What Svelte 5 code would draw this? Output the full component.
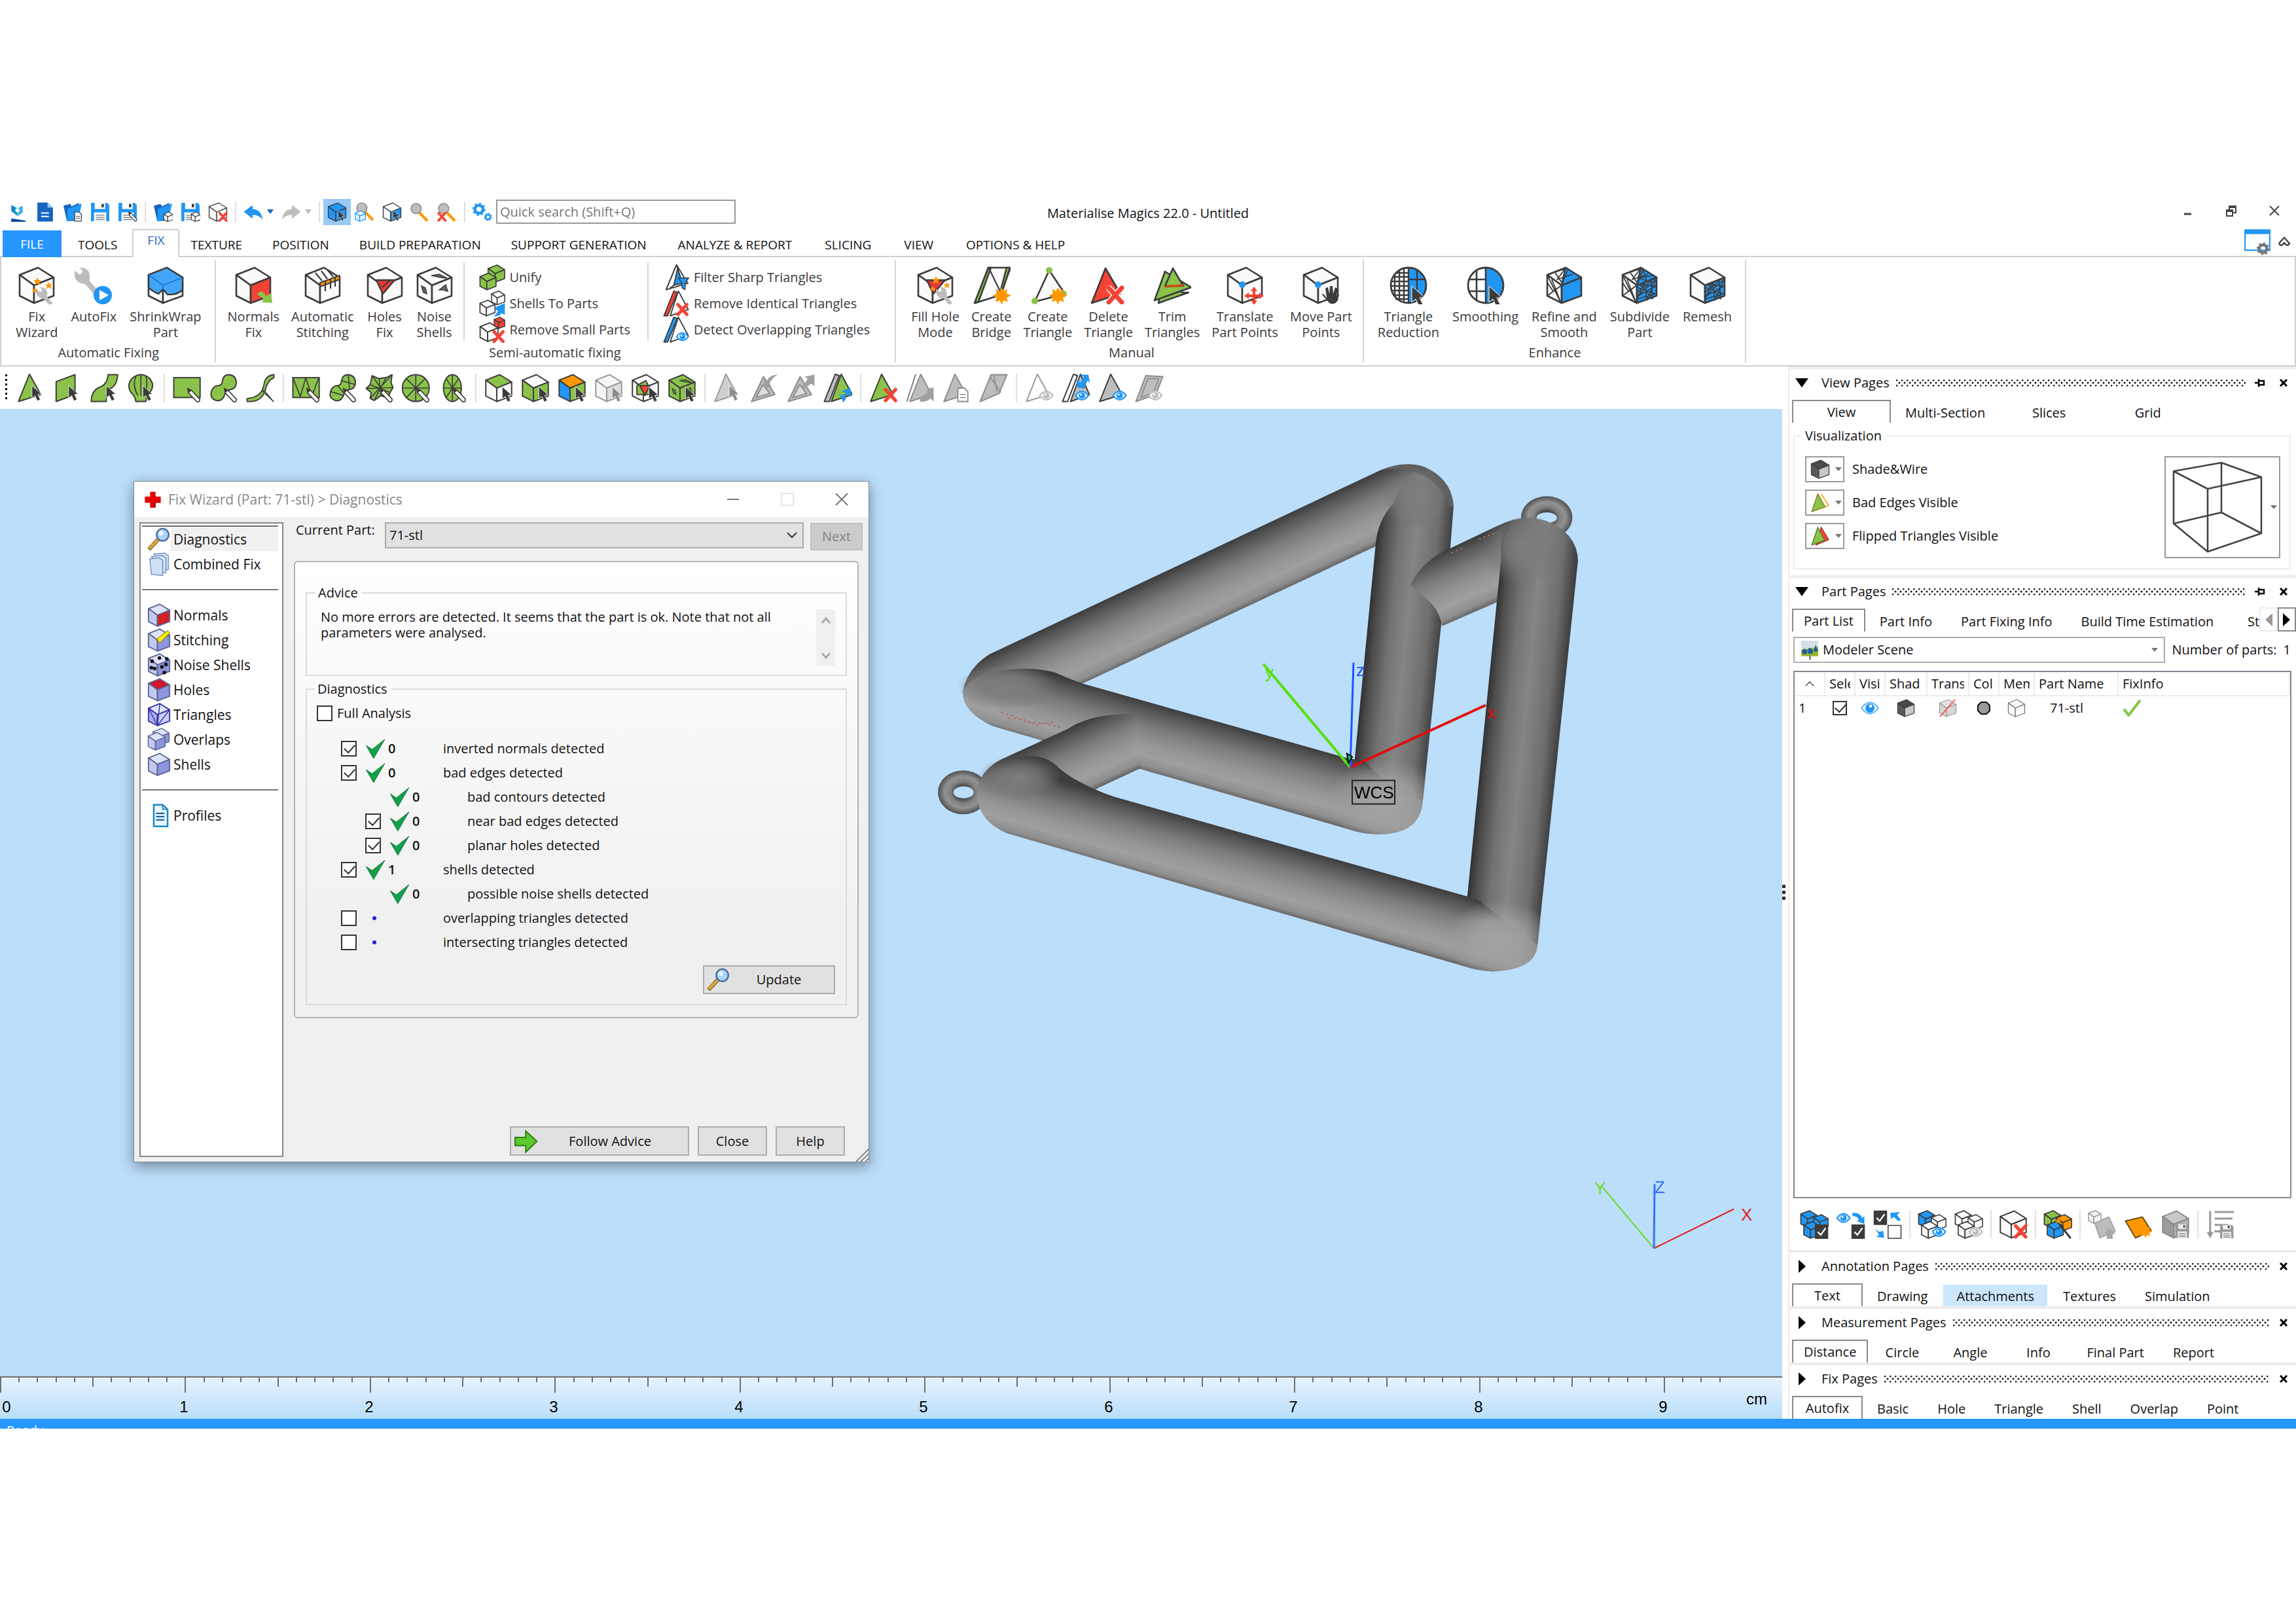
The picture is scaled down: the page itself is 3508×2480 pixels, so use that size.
<script lang="ts">
  type Tool = string | null; // null draws a separator
  type RibbonButton = { icon: string; label: string[] };
  type Check = { text: string; count?: string; box?: boolean; checked?: boolean; indent?: boolean };

  // palette shared by the icons
  const K = '#3c3c3c';
  const W = '#fafafa';
  const B = '#2196f3';
  const G = '#8bc34a';
  const R = '#f44336';
  const O = '#ff9800';
  const N = '#bdbdbd';
  const D = '#8c8c8c';

  // ---- icon building blocks, all on a 58x58 grid ----
  const poly = (points: string, fill: string, stroke = K, w = 2.6) =>
    `<polygon points="${points}" fill="${fill}" stroke="${stroke}" stroke-width="${w}" stroke-linejoin="round"/>`;
  const line = (d: string, stroke = K, w = 2.2, fill = 'none') =>
    `<path d="${d}" fill="${fill}" stroke="${stroke}" stroke-width="${w}" stroke-linejoin="round"/>`;
  const at = (x: number, y: number, s: number, body: string) =>
    `<g transform="translate(${x} ${y}) scale(${s})">${body}</g>`;
  const cube = (top: string, left: string, right: string, k = K, w = 2.6) =>
    poly('31,2 55,17 25,29 3,13', top, k, w) + poly('3,13 25,29 25,56 3,45', left, k, w) + poly('25,29 55,17 55,45 25,56', right, k, w);
  const cursor = (x: number, y: number, fill = K) =>
    at(x, y, 1, `<path d="M0 0V25L6 20L11 31L17 28L12 18L19 17Z" fill="${fill}" stroke="#fff" stroke-width="1"/>`);
  const pen = (x: number, y: number) =>
    at(x, y, 1, `<path d="M0 0L2 9L19 27Q25 27 24 21L8 4Z" fill="#fff" stroke="${K}" stroke-width="2.2"/><path d="M0 0L2 9L8 4Z" fill="${K}"/>`);
  const cross = (x: number, y: number, s = 1) =>
    at(x, y, s, `<path d="M4 4L24 26M24 4L4 26" stroke="${R}" stroke-width="7" stroke-linecap="round"/>`);
  const eye = (x: number, y: number, c = B) =>
    at(x, y, 1, `<path d="M1 10Q14 -7 27 10Q14 27 1 10Z" fill="#fff" stroke="${c}" stroke-width="3"/><circle cx="14" cy="10" r="6.5" fill="${c}"/><circle cx="12" cy="8" r="2" fill="#fff"/>`);
  const burst = (x: number, y: number, s = 1) =>
    at(x, y, s, `<path d="M14 0L17 6L23 3L22 10L29 13L22 17L24 24L17 21L14 28L11 21L4 24L6 17L0 13L6 10L5 3L11 6Z" fill="${O}"/>`);
  const star = (x: number, y: number, s = 1) =>
    at(x, y, s, `<path d="M6 0L8 4L12 4L9 7L11 12L6 9L2 12L3 7L0 4L4 4Z" fill="${O}"/>`);
  const wrench = (x: number, y: number, s: number) =>
    at(x, y, s, `<path d="M0 4L10 12L15 7L10 0Q26 -1 27 15L26 22L40 38L34 45L19 28Q4 28 0 12Z" fill="${N}"/>`);
  const glass = (x: number, y: number, handle = O) =>
    at(x, y, 1, `<path d="M27 29L50 53" stroke="${handle}" stroke-width="8"/><circle cx="17" cy="17" r="15" fill="${N}" stroke="${D}" stroke-width="3"/>`);
  const floppy = (x: number, y: number, s: number, c: string, back = '#fff') =>
    at(x, y, s, `<path d="M2 2H50L56 8V56H2Z" fill="${c}"/><path d="M13 2H44V20H13Z" fill="${back}"/><path d="M33 5H40V15H33Z" fill="${K}"/><path d="M11 30H47V56H11Z" fill="${back}"/><path d="M16 38H42M16 45H42M16 51H42" stroke="${D}" stroke-width="3"/>`);
  const folder = `<path d="M2 10L22 5L26 12L48 2L44 54L12 56Z" fill="#1565c0"/><path d="M14 20L56 4L46 48L12 56Z" fill="${B}"/>`;
  const tri = (fill: string, k = K) => poly('25,1 48,42 3,56', fill, k);
  const page = (x: number, y: number, c = K) =>
    at(x, y, 1, `<path d="M1 1H14L21 8V28H1Z" fill="#fff" stroke="${c}" stroke-width="2.4"/><path d="M5 14H17M5 20H17" stroke="${c}" stroke-width="2"/>`);
  const spokes = (rx: number) =>
    `<ellipse cx="28" cy="29" rx="${rx}" ry="27" fill="${G}" stroke="${K}" stroke-width="2.6"/>` +
    line(`M28 2V56M${28 - rx} 29H${28 + rx}M${28 - rx * 0.7} 10L${28 + rx * 0.7} 48M${28 + rx * 0.7} 10L${28 - rx * 0.7} 48`);
  const mesh = (x: number) =>
    line(`M${x} 32L${x + 28} 42L${x} 50L${x + 12} 24L${x + 15} 52L${x + 29} 20L${x} 46L${x + 29} 30L${x + 5} 28L${x + 24} 50L${x + 22} 22L${x} 40`, K, 1.6);
  const cracked = line('M3 13L24 56L10 20M3 45L25 29L12 38L3 25M8 11L30 4L18 20L42 12M14 8L26 26L34 6', K, 1.8);
  const noise = (c: string) =>
    `<path d="M24 14L36 12L48 18L38 17ZM9 30L15 33L17 42L12 40ZM36 36L46 28L49 38L42 36Z" fill="${c}" stroke="${K}" stroke-width="1.6"/>`;
  const tick = (x: number, y: number) =>
    at(x, y, 1, `<rect width="27" height="29" fill="${K}"/><path d="M6 15L12 21L22 7" fill="none" stroke="#fff" stroke-width="3"/>`);
  const arrow = (d: string, c = B) => `<path d="${d}" fill="${c}"/>`;
  const gear = (x: number, y: number, s: number, c: string) =>
    at(x, y, s, `<circle cx="18" cy="18" r="11" fill="none" stroke="${c}" stroke-width="8"/><circle cx="18" cy="18" r="16" fill="none" stroke="${c}" stroke-width="5" stroke-dasharray="6 6.5"/>`);

  const list = (top: string, left: string, right: string) => cube(top, left, right, '#5c6690', 3);
  const L1 = '#dfe3fa';
  const L2 = '#c3c9f2';
  const L3 = '#8d95dc';

  const icons: Record<string, string> = {
    // quick access bar
    app: `<path d="M10 8L28 18V40L10 26Z" fill="#0d8bc9"/><path d="M28 18L44 10V30L28 42Z" fill="#3fb5ea"/><circle cx="28" cy="24" r="6" fill="#fff"/><path d="M10 48L52 54V58H10Z" fill="#0d4f9c"/>`,
    doc: `<path d="M6 1H36L52 16V57H6Z" fill="#1565c0"/><path d="M36 1V16H52Z" fill="#90caf9"/><path d="M17 32H40M17 42H40" stroke="#fff" stroke-width="4"/>`,
    open: folder + page(34, 28),
    save: floppy(0, 0, 1, B),
    saveas: floppy(0, 0, 1, B) + pen(32, 29),
    openpart: folder + at(30, 28, 0.52, cube('#fff', '#fff', '#fff', K, 4)),
    savepart: floppy(0, 0, 1, B) + at(30, 28, 0.52, cube('#fff', '#fff', '#fff', K, 4)),
    unload: cube(W, W, W) + cross(30, 28),
    undo: arrow('M1 28L27 8V20Q54 22 56 52Q46 37 27 38V49Z'),
    redo: arrow('M57 28L31 8V20Q4 22 2 52Q12 37 31 38V49Z', N),
    pickpart: cube(B, B, B) + cursor(32, 24),
    zoompart: glass(4, 0) + at(0, 24, 0.58, cube('#e3f2fd', '#e3f2fd', '#e3f2fd', B, 4)),
    pickface: cube(W, W, B) + cursor(32, 24),
    zoom: glass(2, 2),
    unzoom: glass(2, 2) + cross(0, 28),
    gears: gear(0, 2, 1.05, B) + gear(34, 32, 0.64, B),
    layout: `<rect x="3" y="4" width="52" height="42" fill="#fff" stroke="${B}" stroke-width="3"/><rect x="2" y="2" width="54" height="10" fill="${B}"/>` + gear(28, 30, 0.72, '#757575'),

    // ribbon
    fixwizard: cube(W, W, W) + wrench(28, 32, 0.64) + star(24, 17) + star(42, 24, 0.9) + star(22, 32, 0.7),
    autofix: wrench(-1, 2, 0.9) + `<circle cx="43" cy="44" r="14" fill="${B}"/><path d="M38 36L52 44L38 52Z" fill="#fff"/>`,
    shrinkwrap: cube(W, W, W) + `<path d="M3 13L31 2L55 17V36Q46 44 32 43L25 35L18 42Q8 38 3 32Z" fill="#42a5f5" stroke="${K}" stroke-width="2.4"/>` + line('M3 13L25 29L55 17M25 29V36', '#1976d2', 1.8),
    normals: cube(W, W, R) + arrow('M34 42L42 38L49 45L56 41L58 56L42 55L45 50Z', G),
    stitching: cube(W, W, W) + poly('25,25 55,14 55,20 25,31', O, K, 2) + line('M18 10L28 22M27 7L36 19M36 5L45 16M33 28V38M41 25V34M48 22V31M33 22V28M41 20V25M48 17V22', K, 2.2),
    holes: cube(W, W, W) + poly('16,21 44,21 26,42', '#e53935', K, 2.4) + line('M36 22L25 32'),
    noiseshells: cube(W, W, W) + noise('#666'),
    unify: at(18, 0, 0.7, cube(G, G, G, K, 3.6)) + at(0, 18, 0.68, cube(G, G, G, K, 3.6)),
    shells: at(26, 0, 0.56, cube(W, W, W, K, 4)) + at(0, 20, 0.64, cube(W, W, W, K, 3.8)) + arrow('M34 42L38 36L57 28V54L50 50Q44 58 32 57Q42 50 41 44Z'),
    smallparts: at(32, 0, 0.46, cube(R, R, R, K, 4.5)) + at(0, 12, 0.76, cube(W, W, W, K, 3.4)) + cross(29, 29),
    sharp: poly('30,1 55,42 7,56', W) + poly('30,1 40,34 14,54 7,56', '#fff') + poly('32,10 44,42 24,46', B) + poly('34,30 57,30 49,42 49,56 42,52 42,42', B, K, 2),
    identical: poly('34,1 56,42 16,56', '#fff') + poly('24,1 32,4 10,56 2,56', R) + cross(29, 27),
    overlapping: poly('34,1 56,42 16,56', '#fff') + poly('24,1 32,4 10,56 2,56', B) + eye(29, 34),
    fillhole: cube(W, W, W) + poly('16,21 44,21 26,42', '#e53935', K, 2.4) + wrench(30, 32, 0.62) + star(24, 15) + star(42, 24, 0.8) + star(21, 30, 0.7),
    bridge: poly('24,2 58,2 42,44 4,56', W) + poly('24,2 28,2 9,54 3,56', G) + poly('52,2 57,2 46,36 42,40', G) + line('M25 3L43 40') + burst(31, 32, 0.95),
    newtri: poly('31,6 55,42 9,54', W) + `<circle cx="31" cy="6" r="5" fill="${G}"/><circle cx="9" cy="53" r="5" fill="${G}"/><circle cx="53" cy="42" r="5" fill="${G}"/>` + burst(31, 32, 0.95),
    deltri: poly('24,3 47,42 3,56', R) + `<path d="M30 34L48 54M48 34L30 54" stroke="#fff" stroke-width="10" stroke-linecap="round"/>` + cross(25, 29),
    trim: poly('18,8 44,40 54,40 8,56', G) + poly('18,8 58,32 2,52', G) + poly('30,3 46,30 18,30', G) + line('M18 31L46 29', '#d84315', 3),
    translate: cube(W, W, W) + `<circle cx="25" cy="28" r="5" fill="${B}"/>` + arrow('M43 31L48 38H45V43H51V40L58 45L51 50V47H45V52H48L43 59L38 52H41V47H35V50L28 45L35 40V43H41V38H38Z', R),
    move: cube(W, W, W) + `<circle cx="25" cy="28" r="5" fill="${B}"/>` + `<path d="M30 42L34 43L38 48L36 33L40 32L42 42L43 30L47 30L48 42L51 32L55 34L53 45L57 42L55 52Q50 60 42 56Z" fill="${K}"/>`,
    reduction: `<ellipse cx="29" cy="29" rx="27" ry="27" fill="#fff"/><path d="M29 2A27 27 0 0 1 29 56Z" fill="${B}"/><circle cx="29" cy="29" r="27" fill="none" stroke="${K}" stroke-width="2.8"/>` + line('M29 2V56M8 12V46M15 6V52M22 3V55M5 16H29M3 23H29M2 30H29M3 37H29M5 44H29M9 50H29M9 10H29M29 20H54M42 5V36', K, 2.4) + cursor(34, 30),
    smoothing: `<circle cx="29" cy="29" r="27" fill="#fff"/><path d="M29 2A27 27 0 0 1 29 56Z" fill="${B}"/><circle cx="29" cy="29" r="27" fill="none" stroke="${K}" stroke-width="2.8"/>` + line('M29 2V56M15 6V52M4 20H29M4 38H29', K, 2.6) + cursor(34, 30),
    refine: cube(W, W, B) + poly('31,2 55,17 25,29', B) + cracked,
    subdivide: cube(W, W, B) + poly('31,2 55,17 25,29', B) + cracked + mesh(25) + line('M34 4L40 22L28 18L48 14', K, 1.6),
    remesh: cube(W, W, B) + mesh(25),

    // marking toolbar
    marktri: tri(G) + cursor(30, 24),
    markplane: poly('5,16 43,2 43,42 5,56', G) + cursor(30, 24),
    marksurf: line('M36 2H55Q54 24 40 30Q32 36 32 56H2Q2 32 22 26Q34 20 36 2Z', K, 2.6, G) + cursor(32, 24),
    markshell: line('M18 56Q16 44 8 38Q-2 22 12 8Q28 -4 44 8Q58 22 46 38Q40 44 38 56Z', K, 2.6, G) + line('M18 5Q10 24 22 44M28 2V44M38 5Q44 24 34 44') + cursor(32, 24),
    markrect: `<rect x="2" y="8" width="53" height="40" fill="${G}" stroke="${K}" stroke-width="2.6"/>` + pen(30, 30),
    markfree: line('M40 2Q54 4 54 18Q54 30 42 32Q32 34 30 44Q26 56 14 54Q0 50 4 36Q8 24 18 24Q26 24 26 14Q28 2 40 2Z', K, 2.6, G) + pen(30, 30),
    markpoly: line('M56 2Q38 4 36 22Q32 48 2 50V56Q30 58 38 36Q42 14 56 8Z', K, 2.4, G) + line('M32 34L55 56L38 36Z', K, 2, '#fff'),
    winrect: `<rect x="2" y="8" width="53" height="40" fill="${G}" stroke="${K}" stroke-width="2.6"/>` + line('M2 8L17 46L28 8L40 46L54 8') + pen(30, 30),
    winfree: line('M40 2Q54 4 54 18Q54 30 42 32Q32 34 30 44Q26 56 14 54Q0 50 4 36Q8 24 18 24Q26 24 26 14Q28 2 40 2Z', K, 2.6, G) + line('M26 14L54 22M40 2L42 32M4 36L30 44M18 24L32 40') + pen(30, 30),
    winstar: poly('14,4 28,10 42,8 54,2 52,18 56,28 50,38 46,50 32,44 18,54 10,50 12,38 2,30 10,22', G) + line('M14 4L46 50M54 2L10 50M28 10L32 44M2 30L56 28M10 22L50 38M42 8L18 54') + pen(30, 30),
    wincircle: spokes(27) + pen(30, 30),
    winellipse: spokes(18) + pen(30, 30),
    cubetop: cube(G, W, W) + cursor(36, 26),
    cubesides: cube(W, G, G) + cursor(36, 26),
    cubecolor: cube(O, B, G) + cursor(36, 26),
    cubegrey: cube('#f5f5f5', '#f5f5f5', '#ddd', '#9a9a9a') + cursor(36, 26, D),
    cubehole: cube(W, W, W) + poly('12,24 30,14 44,42 12,42', G) + poly('18,24 38,24 28,44', R) + cursor(36, 26),
    cubenoise: cube(G, G, G) + noise('#558b2f') + cursor(36, 26),
    gtri: tri('#cfcfcf', '#9a9a9a') + cursor(32, 24, D),
    gshrink: poly('27,6 50,42 3,56', N, D) + poly('26,22 40,40 12,48', '#ddd', D) + arrow('M56 2Q40 2 34 14L28 12L28 30L44 26L39 20Q44 8 56 2Z', '#a0a0a0'),
    ggrow: poly('27,6 50,42 3,56', N, D) + poly('26,22 40,40 12,48', '#ddd', D) + arrow('M56 2V26L50 20Q42 24 34 32L30 24Q40 18 42 10L36 6Z', '#a0a0a0'),
    invert: poly('36,1 58,42 16,56', G) + poly('24,1 32,4 12,56 2,56', N) + arrow('M36 36L54 28L57 46L50 42L42 46L46 50L40 58L32 40L38 44L46 38Z'),
    delmark: tri(G) + cross(29, 28),
    gflip: line('M20 1L2 56', D, 3) + poly('30,1 52,42 8,56', N, D) + arrow('M30 46Q44 42 44 30L56 28V56L50 50Q40 58 28 56Z', '#a0a0a0'),
    gcopy: tri(N, D) + page(30, 28, D),
    gplane: poly('24,2 56,2 40,40 2,56', N, D) + line('M22 6L44 38M30 4L36 36', D),
    hide: tri('#fff', '#9a9a9a') + eye(29, 34, N),
    invhide: poly('38,1 56,42 18,56', N) + poly('24,1 32,4 12,56 2,56', '#fff') + arrow('M36 2H54L57 18L52 14L46 30L32 28L30 12L38 18L44 6Z') + eye(27, 34),
    show: tri(N) + eye(29, 34),
    gshowall: poly('22,4 56,6 42,42 2,56', N, D) + line('M26 10H48L38 38L12 48Z', D) + eye(27, 34, N),

    // view page
    shade: cube('#4a4a4a', '#5a5a5a', '#c8c8c8'),
    badedges: line('M32 3L54 38L12 50', O, 3, '#fff') + poly('22,3 44,42 4,56', G, '#8a7a20'),
    flipped: poly('32,3 54,40 16,56', R, '#a33') + poly('22,3 42,42 4,56', G, '#557a2a'),

    // part page
    scene: `<rect x="4" y="2" width="50" height="44" fill="#d6dfe6"/><path d="M4 30L54 20V48H4Z" fill="#9cb52a"/><circle cx="14" cy="34" r="8" fill="#1f5f9c"/><path d="M28 22L38 28V40H24V28ZM46 14L54 34H40Z" fill="#1f5f9c"/><path d="M30 46V58" stroke="#555" stroke-width="4"/>`,
    transp: cube('#e4e4e4', '#d6d6d6', '#d6d6d6', '#9a9a9a') + line('M52 2L4 56', '#ff5b50', 4),
    memory: cube(W, W, W, '#777'),
    selvis: at(0, 0, 0.62, cube(B, B, B, K, 3.6)) + at(26, 8, 0.56, cube(B, B, B, K, 3.6)) + at(6, 22, 0.62, cube(B, B, B, K, 3.6)) + tick(30, 29),
    vissel: eye(0, 6) + arrow('M32 6Q46 4 52 16L56 12V28L40 22L45 20Q42 12 32 12Z') + tick(30, 29),
    invsel: tick(1, 1) + arrow('M34 6L54 4L48 10L56 20L50 22L42 14L36 18ZM4 38L12 44L20 42L22 56L6 54L12 50Z') + `<rect x="30" y="31" width="26" height="26" fill="#fff" stroke="${K}" stroke-width="2"/>`,
    showsel: at(0, 0, 0.62, cube(B, B, B, K, 3.6)) + at(26, 8, 0.56, cube(W, W, W, K, 3.6)) + at(6, 22, 0.62, cube(W, W, W, K, 3.6)) + eye(29, 34),
    hidesel: at(0, 0, 0.62, cube(W, W, W, K, 3.6)) + at(26, 8, 0.56, cube(W, W, W, K, 3.6)) + at(6, 22, 0.62, cube(W, W, W, K, 3.6)) + eye(29, 34, N),
    colors: at(0, 0, 0.64, cube(G, G, G, K, 3.6)) + at(24, 8, 0.6, cube(O, O, O, K, 3.6)) + at(6, 22, 0.62, cube(B, B, B, K, 3.6)) + star(24, 16, 0.9) + line('M32 28L55 57', K, 4),
    gload: poly('14,26 42,14 55,42 24,56', N, '#a5a5a5') + at(0, 0, 0.48, cube('#f2f2f2', '#f2f2f2', '#f2f2f2', '#999', 4)) + arrow('M44 36L56 48H50V58H38V48H32Z', '#a8a8a8'),
    plate: poly('2,22 36,14 54,42 22,56', O, '#6a4a10') + burst(29, 30, 0.95),
    gsave: cube('#c8c8c8', '#9c9c9c', '#b4b4b4', '#8a8a8a') + floppy(28, 28, 0.5, '#999', '#eee'),
    gsort: `<path d="M9 2V46" stroke="#9a9a9a" stroke-width="4"/><path d="M2 44H16L9 57Z" fill="#9a9a9a"/><path d="M18 4H57M18 17H54M18 30H46M18 43H30" stroke="#9a9a9a" stroke-width="4"/>` + floppy(28, 29, 0.5, '#999', '#eee'),

    // wizard
    plus: `<path d="M20 3H38V19H55V39H38V55H20V39H3V19H20Z" fill="#e60000"/><path d="M38 39V55H20L26 50H34V36H51L55 39Z" fill="#b00000"/>`,
    search: `<path d="M4 54L28 28" stroke="#8a6a20" stroke-width="10"/><path d="M5 52L28 28" stroke="#e0a63c" stroke-width="6"/><circle cx="38" cy="18" r="15" fill="#a9d4fb" stroke="#4c6e9c" stroke-width="4"/><circle cx="34" cy="14" r="6" fill="#e6f4ff"/>`,
    combined: ['16,4 44,2 52,8 52,42 44,44', '10,10 38,8 46,14 46,50 38,50', '6,16 30,14 38,20 38,57 10,54'].map((p) => poly(p, '#cfe0f7', '#6c86b0', 2)).join(''),
    lnormals: list(L1, L2, '#d32020'),
    lstitch: list(L1, L2, L3) + poly('24,26 50,6 55,12 30,36', '#ffee00', '#a89a00', 2),
    lnoise: list(L1, L2, L3) + ['12,20', '18,38', '30,12', '36,34', '46,28', '42,48', '10,36', '48,14'].map((p) => `<circle cx="${p.split(',')[0]}" cy="${p.split(',')[1]}" r="4.5" fill="#111"/>`).join(''),
    lholes: list('#d0152c', L2, L3),
    ltri: cube('#dfe3fa', '#aab0ee', '#c9cdf8', '#3a34a8', 3) + line('M3 13L25 56L31 2M55 17L25 56', '#3a34a8', 2.4),
    loverlap: at(12, 0, 0.76, list(L1, L2, L3)) + at(0, 10, 0.8, list(L1, L2, L3)),
    lshells: list(L1, L2, L3),
    profiles: `<path d="M16 3H38L50 14V56H16Z" fill="#e9f6ff" stroke="#1c86c8" stroke-width="4"/><path d="M38 3V14H50" fill="none" stroke="#1c86c8" stroke-width="3"/><path d="M22 24H42M22 32H42M22 40H42" stroke="#1c5fa8" stroke-width="3.4"/>`,
    ok: '<path d="M4 20L21 31L56 3L25 56Z" fill="#14a04a" stroke="#0b6b30" stroke-width="1.5"/>',
    fixok: line('M6 32L20 50L54 6', G, 8),
    go: '<path d="M3 20H28V5L54 29L28 54V39H3Z" fill="#5cc92e" stroke="#2a8012" stroke-width="3"/>',
  };

  const quickAccess: Tool[] = ['app', 'doc', 'open', 'save', 'saveas', null, 'openpart', 'savepart', 'unload', null, 'undo', 'caret', 'redo', 'caret-off', null, 'pickpart', 'zoompart', 'pickface', 'zoom', 'unzoom', null, 'gears'];
  const tabs = ['TOOLS', 'FIX', 'TEXTURE', 'POSITION', 'BUILD PREPARATION', 'SUPPORT GENERATION', 'ANALYZE & REPORT', 'SLICING', 'VIEW', 'OPTIONS & HELP'];

  const automatic: RibbonButton[] = [
    { icon: 'fixwizard', label: ['Fix', 'Wizard'] },
    { icon: 'autofix', label: ['AutoFix'] },
    { icon: 'shrinkwrap', label: ['ShrinkWrap', 'Part'] },
  ];
  const semi: RibbonButton[] = [
    { icon: 'normals', label: ['Normals', 'Fix'] },
    { icon: 'stitching', label: ['Automatic', 'Stitching'] },
    { icon: 'holes', label: ['Holes', 'Fix'] },
    { icon: 'noiseshells', label: ['Noise', 'Shells'] },
  ];
  const semiParts = [['unify', 'Unify'], ['shells', 'Shells To Parts'], ['smallparts', 'Remove Small Parts']];
  const semiTriangles = [['sharp', 'Filter Sharp Triangles'], ['identical', 'Remove Identical Triangles'], ['overlapping', 'Detect Overlapping Triangles']];
  const manual: RibbonButton[] = [
    { icon: 'fillhole', label: ['Fill Hole', 'Mode'] },
    { icon: 'bridge', label: ['Create', 'Bridge'] },
    { icon: 'newtri', label: ['Create', 'Triangle'] },
    { icon: 'deltri', label: ['Delete', 'Triangle'] },
    { icon: 'trim', label: ['Trim', 'Triangles'] },
    { icon: 'translate', label: ['Translate', 'Part Points'] },
    { icon: 'move', label: ['Move Part', 'Points'] },
  ];
  const enhance: RibbonButton[] = [
    { icon: 'reduction', label: ['Triangle', 'Reduction'] },
    { icon: 'smoothing', label: ['Smoothing'] },
    { icon: 'refine', label: ['Refine and', 'Smooth'] },
    { icon: 'subdivide', label: ['Subdivide', 'Part'] },
    { icon: 'remesh', label: ['Remesh'] },
  ];

  const marking: Tool[] = ['marktri', 'markplane', 'marksurf', 'markshell', null, 'markrect', 'markfree', 'markpoly', null, 'winrect', 'winfree', 'winstar', 'wincircle', 'winellipse', null, 'cubetop', 'cubesides', 'cubecolor', 'cubegrey', 'cubehole', 'cubenoise', null, 'gtri', 'gshrink', 'ggrow', 'invert', null, 'delmark', 'gflip', 'gcopy', 'gplane', null, 'hide', 'invhide', 'show', 'gshowall'];
  const partTools: Tool[] = ['selvis', 'vissel', 'invsel', null, 'showsel', 'hidesel', null, 'unload', null, 'colors', null, 'gload', 'plate', 'gsave', null, 'gsort'];

  const wizardPages: ([string, string] | null)[] = [
    ['search', 'Diagnostics'], ['combined', 'Combined Fix'], null,
    ['lnormals', 'Normals'], ['lstitch', 'Stitching'], ['lnoise', 'Noise Shells'], ['lholes', 'Holes'], ['ltri', 'Triangles'], ['loverlap', 'Overlaps'], ['lshells', 'Shells'], null,
    ['profiles', 'Profiles'],
  ];
  const checks: Check[] = [
    { text: 'inverted normals detected', count: '0', box: true, checked: true },
    { text: 'bad edges detected', count: '0', box: true, checked: true },
    { text: 'bad contours detected', count: '0', indent: true },
    { text: 'near bad edges detected', count: '0', box: true, checked: true, indent: true },
    { text: 'planar holes detected', count: '0', box: true, checked: true, indent: true },
    { text: 'shells detected', count: '1', box: true, checked: true },
    { text: 'possible noise shells detected', count: '0', indent: true },
    { text: 'overlapping triangles detected', box: true },
    { text: 'intersecting triangles detected', box: true },
  ];

  const visualization = [['shade', 'Shade&Wire'], ['badedges', 'Bad Edges Visible'], ['flipped', 'Flipped Triangles Visible']];
  const columns = ['Sele', 'Visi', 'Shad', 'Trans', 'Col', 'Mem', 'Part Name', 'FixInfo'];
  const foldedPages = [
    { title: 'Annotation Pages', tabs: ['Text', 'Drawing', 'Attachments', 'Textures', 'Simulation'], hot: 'Attachments', size: '' },
    { title: 'Measurement Pages', tabs: ['Distance', 'Circle', 'Angle', 'Info', 'Final Part', 'Report'], hot: '', size: 'medium' },
    { title: 'Fix Pages', tabs: ['Autofix', 'Basic', 'Hole', 'Triangle', 'Shell', 'Overlap', 'Point'], hot: '', size: '' },
  ];

  // ruler: one tick per millimetre, 9.3 cm in view
  const tickX = (mm: number) => Math.round(1 + (mm * 2542) / 90);
  const ticks = Array.from({ length: 94 }, (_, mm) => ({
    x: tickX(mm),
    len: mm % 10 === 0 ? 24 : mm % 5 === 0 ? 15 : 8,
  }));
</script>

{#snippet icon(name: string, size: number)}
  <svg viewBox="0 0 58 58" width={size} height={size} aria-hidden="true">{@html icons[name]}</svg>
{/snippet}

{#snippet bigButtons(items: RibbonButton[])}
  {#each items as item}
    <button class="big">
      {@render icon(item.icon, 58)}
      <span>{item.label[0]}{#if item.label[1]}<br />{item.label[1]}{/if}</span>
    </button>
  {/each}
{/snippet}

{#snippet smallButtons(items: string[][])}
  <div class="small-col">
    {#each items as [name, label]}
      <button class="small">{@render icon(name, 40)}<span>{label}</span></button>
    {/each}
  </div>
{/snippet}

{#snippet toolStrip(items: Tool[])}
  {#each items as name}
    {#if name}
      <button class="tool" aria-label={name}>{@render icon(name, 44)}</button>
    {:else}
      <span class="sep"></span>
    {/if}
  {/each}
{/snippet}

{#snippet pageHeader(title: string, open: boolean)}
  <header class="page-header">
    <button class="fold" aria-label="Toggle {title}">
      <svg viewBox="0 0 22 22" width="22" height="22"><path d={open ? 'M1 4H21L11 18Z' : 'M6 1V21L17 11Z'} /></svg>
    </button>
    <h2>{title}</h2>
    <span class="grip"></span>
    {#if open}
      <button class="pin" aria-label="Pin {title}">
        <svg viewBox="0 0 16 14" width="16" height="14"><path d="M0 7H6M6 1V13M6 4H14V10H6" fill="none" stroke="#000" stroke-width="2.4" /></svg>
      </button>
    {/if}
    <button class="shut" aria-label="Close {title}">
      <svg viewBox="0 0 12 12" width="12" height="12"><path d="M1 1L11 11M11 1L1 11" stroke="#000" stroke-width="3" /></svg>
    </button>
  </header>
{/snippet}

{#snippet pageTabs(names: string[], size: string, hot: string)}
  <div class="page-tabs {size}">
    {#each names as name, i}
      <button class:active={i === 0} class:hot={name === hot}>{name}</button>
    {/each}
  </div>
{/snippet}

<main class="screen">
  <div class="titlebar">
    <div class="quick">
      {#each quickAccess as name}
        {#if name === null}
          <span class="sep"></span>
        {:else if name.startsWith('caret')}
          <button class="caret" class:off={name === 'caret-off'} aria-label="History">
            <svg viewBox="0 0 10 7" width="10" height="7"><path d="M0 0H10L5 7Z" /></svg>
          </button>
        {:else}
          <button class="qa" class:pressed={name === 'pickpart'} aria-label={name}>{@render icon(name, 30)}</button>
        {/if}
      {/each}
      <input type="text" placeholder="Quick search (Shift+Q)" aria-label="Quick search" />
    </div>
    <h1>Materialise Magics 22.0 - Untitled</h1>
    <div class="window-buttons">
      <button aria-label="Minimize"><svg viewBox="0 0 20 20" width="20" height="20"><path d="M4 15H15" stroke-width="3" /></svg></button>
      <button aria-label="Restore"><svg viewBox="0 0 20 20" width="20" height="20"><path d="M3 9H12V18H3ZM7 8V3H17V13H13M7 5H17M3 11H12" stroke-width="2" /></svg></button>
      <button aria-label="Close"><svg viewBox="0 0 20 20" width="20" height="20"><path d="M3 3L17 17M17 3L3 17" stroke-width="2" /></svg></button>
    </div>
  </div>

  <nav class="tabs">
    <button class="file">FILE</button>
    {#each tabs as tab}
      <button class:current={tab === 'FIX'}>{tab}</button>
    {/each}
    <span class="fill"></span>
    <div class="tab-tools">
      <button aria-label="Layout">{@render icon('layout', 42)}</button>
      <button aria-label="Collapse ribbon">
        <svg viewBox="0 0 20 20" width="20" height="20"><path d="M2 12L10 3L18 12Q15 18 10 11Q5 18 2 12" fill="none" stroke="#444" stroke-width="2.4" /></svg>
      </button>
    </div>
  </nav>

  <section class="ribbon">
    <div class="group roomy">
      <div class="items">{@render bigButtons(automatic)}</div>
      <h3>Automatic Fixing</h3>
    </div>
    <div class="group semi">
      <div class="items">
        {@render bigButtons(semi)}
        <span class="divider"></span>
        {@render smallButtons(semiParts)}
        <span class="divider"></span>
        {@render smallButtons(semiTriangles)}
      </div>
      <h3>Semi-automatic fixing</h3>
    </div>
    <div class="group manual">
      <div class="items">{@render bigButtons(manual)}</div>
      <h3>Manual</h3>
    </div>
    <div class="group roomy">
      <div class="items">{@render bigButtons(enhance)}</div>
      <h3>Enhance</h3>
    </div>
  </section>

  <div class="workspace">
    <div class="stage">
      <div class="marking">
        <span class="handle"></span>
        {@render toolStrip(marking)}
      </div>

      <div class="scene">
        <svg class="model" viewBox="0 0 2723 1477" preserveAspectRatio="xMidYMid meet">
          <svg x="1400" y="45" width="1100" height="860" viewBox="0 0 1568 1568" preserveAspectRatio="none">
            <defs>
              {#each [['ga', 585, 344, 675, 493], ['gb', 650, 785, 588, 957], ['gd', 1200, 282, 1290, 437], ['gf', 800, 1130, 738, 1300], ['gg', 330, 808, 418, 957]] as [id, x1, y1, x2, y2]}
                <linearGradient id={String(id)} gradientUnits="userSpaceOnUse" {x1} {y1} {x2} {y2}>
                  <stop offset="0" stop-color="#3d3d3d" />
                  <stop offset=".12" stop-color="#555" />
                  <stop offset=".35" stop-color="#7b7b7b" />
                  <stop offset=".6" stop-color="#959595" />
                  <stop offset=".78" stop-color="#9f9f9f" />
                  <stop offset=".93" stop-color="#8e8e8e" />
                  <stop offset="1" stop-color="#6a6a6a" />
                </linearGradient>
              {/each}
              {#each [['gc', 985, 500, 1148, 513], ['ge', 1236, 800, 1404, 813]] as [id, x1, y1, x2, y2]}
                <linearGradient id={String(id)} gradientUnits="userSpaceOnUse" {x1} {y1} {x2} {y2}>
                  <stop offset="0" stop-color="#303030" />
                  <stop offset=".1" stop-color="#4c4c4c" />
                  <stop offset=".3" stop-color="#737373" />
                  <stop offset=".52" stop-color="#858585" />
                  <stop offset=".8" stop-color="#6e6e6e" />
                  <stop offset="1" stop-color="#3c3c3c" />
                </linearGradient>
              {/each}
              <radialGradient id="knee" cx=".5" cy=".5" r=".5">
                <stop offset="0" stop-color="#a4a4a4" />
                <stop offset=".5" stop-color="#a0a0a0" stop-opacity=".85" />
                <stop offset="1" stop-color="#989898" stop-opacity="0" />
              </radialGradient>
              <radialGradient id="shade" cx=".5" cy=".5" r=".5">
                <stop offset="0" stop-color="#7e7e7e" />
                <stop offset=".5" stop-color="#7a7a7a" stop-opacity=".75" />
                <stop offset="1" stop-color="#747474" stop-opacity="0" />
              </radialGradient>
              <radialGradient id="ring" cx=".5" cy=".5" r=".5">
                <stop offset=".3" stop-color="#4a4a4a" />
                <stop offset=".5" stop-color="#808080" />
                <stop offset=".72" stop-color="#929292" />
                <stop offset="1" stop-color="#505050" />
              </radialGradient>
              <clipPath id="clip-b"><path d="M940 890Q1060 820 1120 850L1103 1010Q1098 1100 1010 1102Q985 1102 960 1095L800 1040Z" /></clipPath>
              <clipPath id="clip-f"><path d="M1200 1275L1380 1200L1353 1410Q1350 1480 1255 1484Q1230 1482 1210 1476L1000 1400Z" /></clipPath>
              <clipPath id="clip-e"><path d="M1200 275L1270 240Q1335 200 1370 228Q1440 262 1441 340L1430 500L1270 450Z" /></clipPath>
              <clipPath id="clip-c"><path d="M1010 88Q1065 58 1110 80Q1168 115 1170 190L1163 305L1000 300L960 200Z" /></clipPath>
            </defs>

            <!-- eyelets -->
            <path fill="url(#ring)" fill-rule="evenodd" d="M1317 219A56 59 0 1 1 1429 219A56 59 0 1 1 1317 219ZM1351 220A22 15 0 1 0 1395 220A22 15 0 1 0 1351 220Z" />
            <path fill="url(#ring)" fill-rule="evenodd" d="M47 985A55 61 0 1 1 157 985A55 61 0 1 1 47 985ZM81 985A22 17 0 1 0 125 985A22 17 0 1 0 81 985Z" />

            <!-- inner triangle -->
            <path fill="url(#ga)" d="M101 705Q110 640 160 600L1010 88Q1065 60 1110 80L1080 140L1000 300L362 682L250 760L110 740Z" />
            <path fill="url(#gc)" d="M1040 180Q1062 115 1100 76Q1168 115 1170 190L1163 305L1143 520L1103 1010L960 1000L955 890L1000 300Q1004 225 1040 180Z" />
            <path fill="#5f5f5f" d="M1010 88Q1065 58 1110 80Q1168 115 1170 190L1160 190Q1140 110 1080 92Q1050 80 1010 88Z" />
            <ellipse cx="1088" cy="165" rx="72" ry="90" fill="url(#shade)" clip-path="url(#clip-c)" />
            <path fill="url(#gb)" d="M101 705Q120 655 200 643Q260 636 300 650Q340 672 362 682L940 890Q985 895 995 925Q1050 980 1103 1010Q1098 1100 1010 1102Q985 1102 960 1095L165 800Q100 760 101 705Z" />
            <ellipse cx="200" cy="690" rx="110" ry="62" fill="url(#shade)" />
            <ellipse cx="1022" cy="1010" rx="130" ry="120" fill="url(#knee)" clip-path="url(#clip-b)" />

            <!-- outer triangle -->
            <path fill="url(#gd)" d="M1075 408Q1105 335 1163 305L1270 240Q1300 222 1335 221L1330 330L1270 452L1145 522Q1140 480 1115 450Q1095 428 1075 408Z" />
            <path fill="url(#ge)" d="M1274 325Q1268 260 1300 226Q1335 217 1370 228Q1440 262 1441 340L1353 1410L1240 1400L1200 1275L1274 330Z" />
            <ellipse cx="1325" cy="300" rx="92" ry="110" fill="url(#shade)" clip-path="url(#clip-e)" />
            <path fill="url(#gg)" d="M132 980Q140 920 190 890L330 808Q370 775 430 769L480 765Q488 800 488 918L398 972L300 1040Z" />
            <path fill="url(#gf)" d="M132 980Q140 915 200 890Q270 872 300 905Q320 930 345 948Q390 980 430 997L1200 1275Q1225 1280 1238 1300Q1290 1350 1353 1410Q1350 1480 1255 1484Q1230 1482 1210 1476L200 1100Q130 1065 132 980Z" />
            <ellipse cx="225" cy="945" rx="92" ry="65" fill="url(#shade)" />
            <ellipse cx="1270" cy="1395" rx="120" ry="110" fill="url(#knee)" clip-path="url(#clip-f)" />

            <!-- traces of marked triangles -->
            <path d="M185 762L215 775L240 790L280 792L318 806M200 778L235 782L262 798L300 788M1165 318L1190 305M1225 280L1270 258" fill="none" stroke="#b06666" stroke-width="3" stroke-dasharray="5 6" />
          </svg>

          <g fill="none" stroke-width="3">
            <path d="M2063 547L2270 452" stroke="#e60a0a" stroke-width="4" />
            <path d="M2063 547L1930 389" stroke="#58e010" stroke-width="4" />
            <path d="M2063 547L2068 387" stroke="#1c55ff" />
            <path d="M2058 526L2066 531L2060 540Z" fill="#00d860" stroke="#000" stroke-width="2" />
            <rect x="2066" y="567" width="65" height="36" stroke="#222" stroke-width="2" />
            <path d="M2527 1282L2649 1222" stroke="#e02020" stroke-width="2" />
            <path d="M2527 1282L2447 1187" stroke="#6edc28" stroke-width="2" />
            <path d="M2527 1282L2528 1184" stroke="#3c6cff" />
          </g>
          <g class="axis-text">
            <text x="2069" y="594">WCS</text>
            <text x="2272" y="472" fill="#e60a0a">x</text>
            <text x="1933" y="410" fill="#58e010">y</text>
            <text x="2072" y="407" fill="#1c55ff">z</text>
            <text x="2660" y="1239" fill="#e02020">X</text>
            <text x="2436" y="1198" fill="#6edc28">Y</text>
            <text x="2528" y="1197" fill="#3c6cff">Z</text>
          </g>
        </svg>

        <div class="wizard" role="dialog" aria-labelledby="wizard-title">
          <header>
            {@render icon('plus', 27)}
            <h2 id="wizard-title">Fix Wizard (Part: 71-stl) &gt; Diagnostics</h2>
            <button aria-label="Minimize"><svg viewBox="0 0 20 20" width="20" height="20"><path d="M1 10H19" stroke="#777" stroke-width="2" /></svg></button>
            <button aria-label="Maximize" disabled><svg viewBox="0 0 20 20" width="20" height="20"><rect x="1" y="1" width="18" height="18" fill="none" stroke="#e6e6e6" stroke-width="2" /></svg></button>
            <button aria-label="Close"><svg viewBox="0 0 20 20" width="20" height="20"><path d="M1 1L19 19M19 1L1 19" stroke="#777" stroke-width="2" /></svg></button>
          </header>
          <div class="wizard-body">
            <ul class="wizard-pages">
              {#each wizardPages as item, i}
                {#if item}
                  <li class:chosen={i === 0}>
                    <button>{@render icon(item[0], 36)}<span>{item[1]}</span></button>
                  </li>
                {:else}
                  <li class="rule"></li>
                {/if}
              {/each}
            </ul>
            <div class="wizard-main">
              <div class="current">
                <label for="current-part">Current Part:</label>
                <div class="combo">
                  <select id="current-part"><option>71-stl</option></select>
                  <svg viewBox="0 0 16 10" width="16" height="10"><path d="M1 1L8 8L15 1" fill="none" stroke="#333" stroke-width="2" /></svg>
                </div>
                <button class="next" disabled>Next</button>
              </div>
              <div class="sheet">
                <fieldset>
                  <legend>Advice</legend>
                  <div class="advice">
                    <p>No more errors are detected. It seems that the part is ok. Note that not all parameters were analysed.</p>
                    <div class="scroll">
                      <svg viewBox="0 0 14 10" width="14" height="10"><path d="M1 9L7 2L13 9" fill="none" stroke="#aaa" stroke-width="3" /></svg>
                      <svg viewBox="0 0 14 10" width="14" height="10"><path d="M1 1L7 8L13 1" fill="none" stroke="#aaa" stroke-width="3" /></svg>
                    </div>
                  </div>
                </fieldset>
                <fieldset class="diagnostics">
                  <legend>Diagnostics</legend>
                  <label class="full"><input type="checkbox" />Full Analysis</label>
                  {#each checks as row}
                    <label class="check" class:indent={row.indent}>
                      <span class="box">{#if row.box}<input type="checkbox" checked={row.checked} />{/if}</span>
                      <span class="state">
                        {#if row.count}{@render icon('ok', 32)}{:else}<i></i>{/if}
                      </span>
                      <b>{row.count ?? ''}</b>
                      <span>{row.text}</span>
                    </label>
                  {/each}
                  <button class="push update">{@render icon('search', 36)}<span>Update</span></button>
                </fieldset>
              </div>
              <div class="actions">
                <button class="push follow">{@render icon('go', 38)}<span>Follow Advice</span></button>
                <button class="push">Close</button>
                <button class="push">Help</button>
              </div>
            </div>
          </div>
          <svg class="resize" viewBox="0 0 20 20" width="20" height="20"><path d="M1 20L20 1M8 20L20 8M15 20L20 15" stroke="#888" stroke-width="2" /></svg>
        </div>
      </div>

      <svg class="ruler" viewBox="0 0 2723 65" preserveAspectRatio="xMinYMin meet">
        <path d="M0 1H2723" stroke="#707070" stroke-width="2" />
        {#each ticks as t}
          <path d="M{t.x} 1v{t.len}" stroke="#707070" stroke-width="2" />
        {/each}
        {#each { length: 10 } as _, i}
          <text x={i === 0 ? 10 : tickX(i * 10) - 2} y="55" text-anchor="middle">{i}</text>
        {/each}
        <text x="2684" y="43" text-anchor="middle">cm</text>
      </svg>
    </div>

    <div class="splitter"><span></span></div>

    <aside>
      <section>
        {@render pageHeader('View Pages', true)}
        {@render pageTabs(['View', 'Multi-Section', 'Slices', 'Grid'], 'wide', '')}
        <fieldset class="visual">
          <legend>Visualization</legend>
          <div class="modes">
            {#each visualization as [name, label]}
              <div class="mode">
                <button aria-label={label}>
                  {@render icon(name, 30)}
                  <svg viewBox="0 0 10 6" width="10" height="6"><path d="M0 0H10L5 6Z" fill="#777" /></svg>
                </button>
                <span>{label}</span>
              </div>
            {/each}
          </div>
          <button class="view-cube" aria-label="Standard views">
            <svg viewBox="0 0 138 140" width="138" height="140">
              <path d="M2 15L75 2L136 24L54 42ZM2 15V95L54 138V42M136 24V110L54 138M75 2V78L2 95M75 78L136 110" fill="none" stroke="#444" stroke-width="2.6" stroke-linejoin="round" />
            </svg>
            <svg viewBox="0 0 10 6" width="10" height="6"><path d="M0 0H10L5 6Z" fill="#777" /></svg>
          </button>
        </fieldset>
      </section>

      <section class="parts">
        {@render pageHeader('Part Pages', true)}
        <div class="tab-scroll">
          {@render pageTabs(['Part List', 'Part Info', 'Part Fixing Info', 'Build Time Estimation', 'Str'], '', '')}
          <button class="left" aria-label="Scroll left" disabled><svg viewBox="0 0 12 20" width="12" height="20"><path d="M12 0V20L1 10Z" fill="#999" /></svg></button>
          <button aria-label="Scroll right"><svg viewBox="0 0 12 20" width="12" height="20"><path d="M0 0V20L11 10Z" /></svg></button>
        </div>
        <div class="scene-row">
          <div class="combo scene-combo">
            {@render icon('scene', 30)}
            <select aria-label="Scene"><option>Modeler Scene</option></select>
            <svg class="drop" viewBox="0 0 10 6" width="10" height="6"><path d="M0 0H10L5 6Z" fill="#777" /></svg>
          </div>
          <span>Number of parts:</span><span>1</span>
        </div>
        <div class="part-list">
          <table>
            <colgroup><col class="c-num" /><col class="c-s" /><col class="c-s" /><col class="c-m" /><col class="c-m" /><col class="c-s" /><col class="c-mem" /><col class="c-name" /><col /></colgroup>
            <thead>
              <tr>
                <th class="sort"><svg viewBox="0 0 14 8" width="14" height="8"><path d="M1 7L7 1L13 7" fill="none" stroke="#555" stroke-width="1.6" /></svg></th>
                {#each columns as head}
                  <th><span>{head}</span></th>
                {/each}
              </tr>
            </thead>
            <tbody>
              <tr>
                <td>1</td>
                <td class="mid"><input type="checkbox" checked aria-label="Selected" /></td>
                <td class="mid"><svg viewBox="0 0 28 20" width="28" height="20">{@html `<path d="M1 10Q14 -7 27 10Q14 27 1 10Z" fill="#fff" stroke="#5cb3fa" stroke-width="2"/><circle cx="14" cy="10" r="7" fill="${B}"/><circle cx="15" cy="7" r="2.4" fill="#fff"/>`}</svg></td>
                <td class="mid">{@render icon('shade', 28)}</td>
                <td class="mid">{@render icon('transp', 28)}</td>
                <td class="mid"><svg viewBox="0 0 22 22" width="22" height="22"><path d="M7 2H15L20 7V15L15 20H7L2 15V7Z" fill="#9a9a9a" stroke="#111" stroke-width="2" /></svg></td>
                <td class="mid">{@render icon('memory', 28)}</td>
                <td class="name">71-stl</td>
                <td>{@render icon('fixok', 30)}</td>
              </tr>
            </tbody>
          </table>
        </div>
        <div class="part-tools">{@render toolStrip(partTools)}</div>
      </section>

      {#each foldedPages as item}
        <section>
          {@render pageHeader(item.title, false)}
          {@render pageTabs(item.tabs, item.size, item.hot)}
        </section>
      {/each}
    </aside>
  </div>

  <footer><span>Ready</span></footer>
</main>

<style>
  :global(body) {
    margin: 0;
    background: #fff;
  }

  * {
    box-sizing: border-box;
  }

  .screen {
    display: flex;
    flex-direction: column;
    min-height: 100vh;
    padding: 301px 0 297px;
    font-family: 'Open Sans', 'Noto Sans', sans-serif;
    font-size: 20px;
    line-height: 24px;
    color: #111;
    background: #fff;
  }

  button,
  select,
  input {
    margin: 0;
    padding: 0;
    border: 0;
    border-radius: 0;
    background: none;
    font: inherit;
    color: inherit;
  }

  svg {
    display: block;
    flex: none;
  }

  h1,
  h2,
  h3,
  p,
  ul {
    margin: 0;
    padding: 0;
    font-size: 20px;
    font-weight: 400;
  }

  fieldset {
    margin: 0;
    min-width: 0;
    border: 2px solid #dcdcdc;
  }

  input[type='checkbox'] {
    appearance: none;
    display: block;
    position: relative;
    width: 24px;
    height: 24px;
    border: 2px solid #333;
    background: #fff;
  }

  input[type='checkbox']:checked::after {
    content: '';
    position: absolute;
    left: 3px;
    top: 3px;
    width: 14px;
    height: 8px;
    border: solid #333;
    border-width: 0 0 2px 2px;
    transform: rotate(-48deg);
  }

  /* --- Title bar --- */
  .titlebar {
    display: grid;
    grid-template-columns: 1fr auto 1fr;
    align-items: center;
    height: 49px;
  }

  .quick {
    display: flex;
    align-items: center;
    padding: 0 0 4px 6px;
  }

  .qa {
    display: flex;
    justify-content: center;
    align-items: center;
    width: 42px;
    height: 40px;
  }

  .qa.pressed {
    background: #99c9f5;
  }

  .caret {
    width: 16px;
    fill: #1565c0;
  }

  .caret.off {
    fill: #bbb;
  }

  .sep {
    flex: none;
    width: 2px;
    height: 32px;
    margin: 0 5px;
    background: #e0e0e0;
  }

  .quick input {
    width: 366px;
    height: 37px;
    padding: 0 4px;
    border: 2px solid #999;
  }

  .quick input::placeholder {
    color: #777;
    opacity: 1;
  }

  .window-buttons {
    display: flex;
    justify-content: flex-end;
    padding-bottom: 8px;
  }

  .window-buttons button {
    display: flex;
    justify-content: center;
    width: 66px;
    fill: none;
    stroke: #444;
  }

  /* --- Ribbon tabs --- */
  .tabs {
    display: flex;
    height: 43px;
    padding-left: 2px;
    box-shadow: inset 0 -2px #d0d0d0;
    font-size: 19px;
  }

  .tabs > button {
    padding: 3px 21px 0;
    border: 2px solid transparent;
    border-bottom: 0;
  }

  .tabs > button:nth-child(n + 8) {
    padding: 3px 23px 0;
  }

  .tabs .file {
    width: 94px;
    padding-top: 0;
    color: #fff;
    background: #2796ff;
    background-clip: padding-box;
  }

  .tabs .current {
    border-color: #d0d0d0;
    background: #fff;
    color: #2b6cc4;
  }

  .fill {
    flex: 1;
  }

  .tab-tools {
    display: flex;
    align-items: center;
    gap: 10px;
    padding: 0 8px 3px 0;
  }

  /* --- Ribbon --- */
  .ribbon {
    display: flex;
    height: 167px;
    padding: 4px 0 4px 1px;
    border: solid #d0d0d0;
    border-width: 0 2px 2px;
    color: #3b3b3b;
  }

  .group {
    display: flex;
    flex-direction: column;
    padding: 0 10px 0 11px;
    border-right: 2px solid #d6d6d6;
  }

  .group.semi {
    padding-left: 9px;
  }

  .group.manual {
    padding: 0 7px 0 14px;
  }

  .items {
    display: flex;
    flex: 1;
  }

  .group h3 {
    padding-bottom: 3px;
    text-align: center;
  }

  .big {
    display: flex;
    flex-direction: column;
    align-items: center;
    padding: 10px 9px 0;
    line-height: 24px;
  }

  .roomy .big {
    padding: 10px 10px 0;
  }

  .big span {
    margin-top: 7px;
  }

  .divider {
    width: 2px;
    height: 120px;
    margin: 4px 0 0 6px;
    background: #d6d6d6;
  }

  .small-col {
    display: flex;
    flex-direction: column;
    padding: 7px 20px 0 22px;
  }

  .small {
    display: flex;
    align-items: center;
    gap: 7px;
    height: 40px;
  }

  .small-col:last-child {
    padding-right: 28px;
  }

  /* --- Workspace --- */
  .workspace {
    display: flex;
    flex: 1;
  }

  .stage {
    display: flex;
    flex: 1;
    flex-direction: column;
    min-width: 0;
  }

  .marking {
    display: flex;
    align-items: center;
    height: 65px;
    padding-left: 8px;
  }

  .handle {
    width: 3px;
    height: 42px;
    margin-right: 9px;
    background: repeating-linear-gradient(#000 0 3px, transparent 3px 7px);
  }

  .tool {
    display: flex;
    justify-content: center;
    width: 56px;
  }

  .marking .sep,
  .part-tools .sep {
    height: 44px;
  }

  .marking .sep {
    margin: 0 6px;
  }

  .scene {
    position: relative;
    flex: 1;
    background: #bbdefb;
  }

  .model {
    width: 100%;
    height: 100%;
  }

  .axis-text {
    font-family: 'Liberation Sans', sans-serif;
    font-size: 26px;
  }

  .ruler {
    width: 100%;
    height: 65px;
    background: linear-gradient(#e8f3fd, #b9defa);
    font-family: 'Liberation Sans', sans-serif;
    font-size: 24px;
  }

  .splitter {
    display: flex;
    align-items: center;
    width: 9px;
  }

  .splitter span {
    width: 5px;
    height: 24px;
    background: repeating-linear-gradient(#333 0 5px, transparent 5px 9px);
  }

  /* --- Fix wizard window --- */
  .wizard {
    position: absolute;
    left: 204px;
    top: 110px;
    width: 1124px;
    border: 1px solid #7c8a96;
    background: #f0f0f0;
    box-shadow: 0 6px 20px rgba(0, 0, 0, 0.4);
  }

  .wizard header {
    display: flex;
    align-items: center;
    height: 54px;
    padding-left: 15px;
    background: #fff;
  }

  .wizard header h2 {
    flex: 1;
    padding-left: 10px;
    font-size: 21px;
    color: #8a8a8a;
  }

  .wizard header button {
    display: flex;
    justify-content: center;
    width: 83px;
  }

  .wizard-body {
    display: flex;
    gap: 16px;
    padding: 8px 15px 7px 8px;
  }

  .wizard-pages {
    width: 220px;
    padding: 3px 6px 0 2px;
    border: 2px solid #828790;
    background: #fff;
    font-size: 21px;
    list-style: none;
  }

  .wizard-pages li {
    height: 38px;
  }

  .wizard-pages li:first-child {
    border-top: 2px solid #707070;
    height: 40px;
  }

  .wizard-pages button {
    display: flex;
    align-items: center;
    width: 100%;
    height: 38px;
    padding-left: 8px;
  }

  .wizard-pages span {
    flex: 1;
    padding: 6px 0 6px 4px;
    text-align: left;
  }

  .wizard-pages .chosen span {
    background: #f0f0f0;
  }

  .wizard-pages .rule {
    height: 40px;
    background: linear-gradient(#777, #777) center / 100% 2px no-repeat;
  }

  .wizard-main {
    flex: 1;
    min-width: 0;
  }

  .current {
    display: flex;
    align-items: flex-start;
    margin-right: -6px;
    padding-left: 3px;
  }

  .current label {
    width: 136px;
  }

  .combo {
    position: relative;
    display: flex;
    align-items: center;
    flex: 1;
    height: 40px;
    border: 2px solid #adadad;
    background: #e1e1e1;
  }

  .combo select {
    appearance: none;
    position: absolute;
    inset: 0;
    width: 100%;
    height: 100%;
    padding: 0 36px 0 5px;
  }

  .combo > svg {
    position: absolute;
    right: 8px;
    pointer-events: none;
  }

  .next {
    width: 80px;
    height: 42px;
    margin: 1px 0 0 10px;
    border: 2px solid #bfbfbf;
    background: #ccc;
    color: #838383;
  }

  .sheet {
    margin: 16px 0 0;
    padding: 35px 16px 18px 16px;
    border: 2px solid #b4b4b4;
    border-radius: 6px;
    background: linear-gradient(#fff, #f0f0f0 80%);
  }

  .sheet fieldset {
    padding: 13px 16px 14px 21px;
  }

  legend {
    margin-left: -9px;
    padding: 0 5px;
  }

  .sheet .diagnostics {
    margin-top: 8px;
    padding: 13px 16px 15px 15px;
  }

  .diagnostics legend {
    margin-left: -4px;
  }

  .advice {
    display: flex;
    justify-content: space-between;
  }

  .advice p {
    width: 720px;
  }

  .scroll {
    display: flex;
    flex-direction: column;
    justify-content: space-between;
    align-items: center;
    width: 29px;
    height: 86px;
    padding: 12px 0 10px;
    background: #f0f0f0;
  }

  .full {
    display: flex;
    align-items: center;
    gap: 7px;
    margin-bottom: 24px;
  }

  .check {
    display: flex;
    align-items: center;
    height: 36px;
    margin-bottom: 1px;
    padding-left: 37px;
  }

  .check.indent {
    padding-left: 74px;
  }

  .box {
    width: 36px;
  }

  .state {
    display: flex;
    width: 36px;
  }

  .state i {
    width: 6px;
    height: 6px;
    margin-left: 12px;
    border-radius: 50%;
    background: #2020e0;
  }

  .check b {
    width: 84px;
    font-weight: 600;
  }

  .push {
    display: flex;
    align-items: center;
    justify-content: center;
    min-width: 106px;
    height: 45px;
    border: 2px solid #adadad;
    background: #e1e1e1;
  }

  .push span {
    flex: 1;
    padding: 0 24px 0 14px;
  }

  .update {
    width: 202px;
    height: 44px;
    margin: 17px 0 0 auto;
    padding-left: 4px;
  }

  .actions {
    display: flex;
    justify-content: flex-end;
    gap: 13px;
    margin-top: 165px;
    padding: 0 21px 2px 0;
  }

  .follow {
    width: 274px;
    padding-left: 4px;
  }

  .resize {
    position: absolute;
    right: 0;
    bottom: 0;
  }

  /* --- Side pages --- */
  aside {
    display: flex;
    flex-direction: column;
    flex: 0 0 776px;
    min-width: 0;
    border-left: 2px solid #ececec;
  }

  aside section {
    border-top: 4px solid #ececec;
  }

  .page-header {
    display: flex;
    align-items: center;
    height: 45px;
    padding: 0 13px 3px 8px;
  }

  .page-header h2 {
    padding: 0 10px 0 19px;
  }

  .grip {
    flex: 1;
    height: 11px;
    background-image: radial-gradient(circle at 1px 1px, #222 1px, transparent 2px), radial-gradient(circle at 5px 5px, #222 1px, transparent 2px);
    background-size: 8px 8px;
  }

  .pin {
    margin-left: 14px;
  }

  .shut {
    margin-left: 16px;
  }

  .pin + .shut {
    margin-left: 22px;
  }

  .page-tabs {
    display: flex;
    height: 35px;
    margin-top: 2px;
    padding-left: 4px;
  }

  .page-tabs button {
    flex: none;
    min-width: 86px;
    padding: 2px 20px 0;
    border: 2px solid transparent;
    border-bottom: 0;
    white-space: nowrap;
  }

  .page-tabs .active {
    min-width: 108px;
    padding: 0 16px;
    border-color: #8a8a8a;
    background: #fff;
  }

  .page-tabs .hot {
    background: #cce6fb;
    background-clip: padding-box;
  }

  .page-tabs.medium button {
    min-width: 104px;
  }

  .page-tabs.wide button {
    min-width: 151px;
  }

  .visual {
    display: flex;
    justify-content: space-between;
    margin: 8px 8px 9px 6px;
    padding: 19px 14px 15px 16px;
    border-color: #ececec;
  }

  .visual legend {
    margin-left: -5px;
  }

  .modes {
    display: flex;
    flex-direction: column;
    gap: 11px;
  }

  .mode {
    display: flex;
    align-items: center;
    gap: 12px;
  }

  .mode button {
    display: flex;
    align-items: center;
    gap: 8px;
    width: 60px;
    height: 40px;
    padding-left: 6px;
    border: 2px solid #9a9a9a;
  }

  .view-cube {
    display: flex;
    align-items: center;
    justify-content: flex-end;
    gap: 12px;
    width: 177px;
    height: 156px;
    padding-right: 3px;
    border: 2px solid #9a9a9a;
  }

  .parts {
    display: flex;
    flex: 1;
    flex-direction: column;
  }

  .tab-scroll {
    display: flex;
    min-width: 0;
  }

  .tab-scroll .page-tabs {
    flex: 1;
    min-width: 0;
    overflow: hidden;
  }

  .tab-scroll > button {
    display: flex;
    align-items: center;
    justify-content: center;
    width: 28px;
    height: 37px;
    border: 2px solid #8a8a8a;
  }

  .tab-scroll > .left {
    border-color: #ececec;
  }

  .scene-row {
    display: flex;
    align-items: center;
    gap: 10px;
    padding: 8px 8px 12px 6px;
    white-space: nowrap;
  }

  .scene-combo {
    background: #fff;
  }

  .scene-combo > svg {
    left: 8px;
    right: auto;
  }

  .scene-combo > .drop {
    left: auto;
    right: 9px;
  }

  .scene-combo select {
    padding-left: 43px;
  }

  .part-list {
    flex: 1;
    margin: 0 7px 0 6px;
    border: 2px solid #828790;
  }

  table {
    width: 100%;
    table-layout: fixed;
    border-collapse: collapse;
  }

  .c-num,
  .c-s {
    width: 46px;
  }

  .c-m {
    width: 64px;
  }

  .c-mem {
    width: 54px;
  }

  .c-name {
    width: 128px;
  }

  th,
  td {
    height: 36px;
    padding: 0 6px;
    font-weight: 400;
    text-align: left;
    vertical-align: middle;
  }

  th {
    border: solid #ececec;
    border-width: 0 2px 2px 0;
  }

  th span {
    display: block;
    overflow: hidden;
    white-space: nowrap;
  }

  .sort svg {
    margin: 0 auto;
  }

  .mid svg,
  .mid input {
    margin: 0 auto;
  }

  .mid input[type='checkbox'] {
    width: 22px;
    height: 22px;
  }

  .mid input[type='checkbox']:checked::after {
    left: 2px;
    top: 2px;
  }

  td.name {
    padding-left: 24px;
  }

  .part-tools {
    display: flex;
    align-items: center;
    height: 79px;
    padding-left: 10px;
  }

  /* --- Status bar, cut off by the window edge --- */
  footer {
    height: 15px;
    overflow: hidden;
    background: #2796ff;
    color: #fff;
  }

  footer span {
    display: block;
    padding: 6px 10px 0;
  }
</style>
